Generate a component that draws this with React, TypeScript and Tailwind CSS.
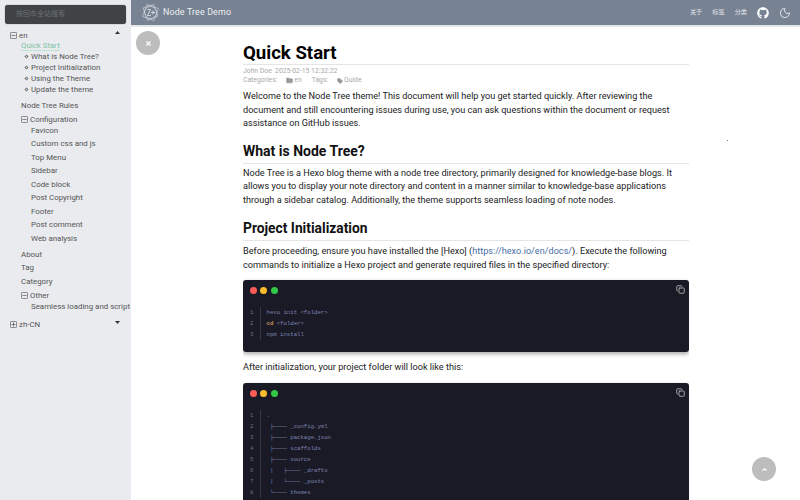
import { Copy, Moon, Folder, Tag, ChevronUp, X } from "lucide-react";
import { FaGithub } from "react-icons/fa";

const sans = "[font-family:'Roboto','Noto_Sans_CJK_SC',sans-serif]";

function TreeBox({ open }: { open: boolean }) {
  return (
    <svg width="7" height="7" viewBox="0 0 7 7" className="shrink-0 text-[#555]" fill="none" stroke="currentColor" strokeWidth="0.7">
      <rect x="0.4" y="0.4" width="6.2" height="6.2" rx="1" />
      <path d="M1.5 3.5h4" />
      {!open && <path d="M3.5 1.5v4" />}
    </svg>
  );
}

function Caret({ up }: { up: boolean }) {
  return (
    <svg width="5" height="3" viewBox="0 0 7 4" className="fill-[#333]">
      <path d={up ? "M3.5 0L7 4H0z" : "M3.5 4L7 0H0z"} />
    </svg>
  );
}

function Sub({ label }: { label: string }) {
  return (
    <div className="flex h-[11px] items-center gap-[3.5px] pl-[24.5px]">
      <span className="h-[3px] w-[3px] rotate-45 border-[0.5px] border-[#777]" />
      <span>{label}</span>
    </div>
  );
}

function Sidebar() {
  const config = ["Favicon", "Custom css and js", "Top Menu", "Sidebar", "Code block", "Post Copyright", "Footer", "Post comment", "Web analysis"];
  return (
    <aside className="h-full w-[131px] shrink-0 overflow-hidden bg-[#e9ebef] text-[7.9px] leading-[11px] text-[#555]">
      <div className="mx-[5px] mt-[5px] flex h-[19px] w-[121px] items-center rounded-[3px] bg-[#3f4346] pl-[11px] text-[7px] text-[#6b6f72] shadow-[0_0_1px_#333]">
        按回车全站搜索
      </div>
      <div className="relative mt-[6px] flex h-[10px] items-center gap-[2px] pl-[10px]">
        <TreeBox open />
        <span>en</span>
        <span className="absolute left-[115px] top-[1px]"><Caret up /></span>
      </div>
      <div className="ml-[21px] h-[11px] w-[39px] whitespace-nowrap border-b border-[#bfe3d3] text-[#7cc5a5]">Quick Start</div>
      <div className="flex flex-col whitespace-nowrap">
        <Sub label="What is Node Tree?" />
        <Sub label="Project Initialization" />
        <Sub label="Using the Theme" />
        <Sub label="Update the theme" />
      </div>
      <div className="mt-[5px] h-[11px] pl-[21px]">Node Tree Rules</div>
      <div className="mt-[3px] flex h-[11px] items-center gap-[2px] pl-[21px]">
        <TreeBox open />
        <span>Configuration</span>
      </div>
      <div className="flex flex-col gap-[2.45px] pl-[31px]">
        {config.map((c) => (
          <div key={c} className="h-[11px]">{c}</div>
        ))}
      </div>
      <div className="mt-[5px] flex flex-col gap-[2.5px] pl-[21px]">
        <div className="h-[11px]">About</div>
        <div className="h-[11px]">Tag</div>
        <div className="h-[11px]">Category</div>
      </div>
      <div className="mt-[3px] flex h-[11px] items-center gap-[2px] pl-[21px]">
        <TreeBox open />
        <span>Other</span>
      </div>
      <div className="h-[11px] whitespace-nowrap pl-[31px]">Seamless loading and script</div>
      <div className="relative mt-[7px] flex h-[11px] items-center gap-[2px] pl-[10px]">
        <TreeBox open={false} />
        <span>zh-CN</span>
        <span className="absolute left-[115px] top-[2px]"><Caret up={false} /></span>
      </div>
    </aside>
  );
}

function Logo() {
  return (
    <svg width="19" height="19" viewBox="0 0 19 19" fill="none" stroke="#e6e9ee" strokeWidth="0.5">
      <circle cx="9.5" cy="9.5" r="6" />
      <path d="M6 1.5L17.5 5.5 13 17.5 1.5 13.5z" />
      <path d="M2 5l10.5-3.5L17 13 6.5 17.5z" />
      <path d="M6.5 6.5h3L6.5 12.5h3.5M12 7.5v4M10 9.5h4" strokeWidth="0.8" />
    </svg>
  );
}

function Header() {
  return (
    <header className="flex h-[27px] shrink-0 items-center border-b-2 border-[#e6e6e6] bg-[#778292] pl-[10px] pr-[9px] text-white">
      <Logo />
      <span className="ml-[3px] text-[8.9px] tracking-[0.15px] text-[#eef0f3]">Node Tree Demo</span>
      <div className="ml-auto flex items-center text-[6.2px] text-[#e6e9ee]">
        <span>关于</span>
        <span className="ml-[10px]">标签</span>
        <span className="ml-[10px]">分类</span>
        <FaGithub className="ml-[10px] h-[12px] w-[12px] text-white" />
        <Moon className="ml-[10px] h-[12px] w-[12px] text-[#eef0f3]" strokeWidth={1.8} />
      </div>
    </header>
  );
}

function CodeBlock({ lines, className }: { lines: React.ReactNode[]; className: string }) {
  return (
    <div className={`relative w-[446px] rounded-[3px] bg-[#1a1a26] pb-[12.2px] pt-[7px] shadow-[0_2px_4px_rgba(0,0,0,0.35)] ${className}`}>
      <div className="flex gap-[3.5px] pl-[6.5px]">
        <span className="h-[7px] w-[7px] rounded-full bg-[#fc5b57]" />
        <span className="h-[7px] w-[7px] rounded-full bg-[#fdbc2e]" />
        <span className="h-[7px] w-[7px] rounded-full bg-[#33c748]" />
      </div>
      <Copy className="absolute right-[4px] top-[5px] h-[9px] w-[9px] text-[#c8c8c8]" strokeWidth={2} />
      <div className="mt-[12.5px] flex font-['Liberation_Mono',monospace] text-[5.67px] leading-[11px]">
        <div className="w-[17px] pr-[6.5px] text-right text-[#6a6f80]">
          {lines.map((_, i) => (
            <div key={i}>{i + 1}</div>
          ))}
        </div>
        <div className="whitespace-pre border-l border-[#353545] pl-[5.5px] text-[#7c86b0]">
          {lines.map((l, i) => (
            <div key={i} className="h-[11px]">{l}</div>
          ))}
        </div>
      </div>
    </div>
  );
}

function Article() {
  return (
    <main className="h-[473px] w-[446px] overflow-hidden pt-[16px] text-[9.15px] leading-[13.5px] text-[#222]">
      <h1 className="border-b border-[#e5e5e5] text-[18.6px] font-bold leading-[21px] text-black">Quick Start</h1>
      <div className="mt-[2px] text-[6.8px] leading-[9px] text-[#aaa]">
        <div>John Doe&nbsp;&nbsp;2025-02-15 12:32:22</div>
        <div className="flex items-center">
          <span>Categories:</span>
          <Folder className="ml-[9px] mr-[1px] h-[7px] w-[7px] fill-[#999] text-[#999]" />
          <span>en</span>
          <span className="ml-[10px]">Tags:</span>
          <Tag className="ml-[9px] mr-[1px] h-[6px] w-[6px] fill-[#999] text-[#999]" />
          <span>Guide</span>
        </div>
      </div>
      <p className="mt-[5px] whitespace-nowrap">
        Welcome to the Node Tree theme! This document will help you get started quickly. After reviewing the<br />
        document and still encountering issues during use, you can ask questions within the document or request<br />
        assistance on GitHub issues.
      </p>
      <h2 className="mt-[10px] border-b border-[#e5e5e5] pb-[2px] text-[14px] font-bold leading-[20px] text-[#111]">What is Node Tree?</h2>
      <p className="mt-[3px] whitespace-nowrap">
        Node Tree is a Hexo blog theme with a node tree directory, primarily designed for knowledge-base blogs. It<br />
        allows you to display your note directory and content in a manner similar to knowledge-base applications<br />
        through a sidebar catalog. Additionally, the theme supports seamless loading of note nodes.
      </p>
      <h2 className="mt-[11px] border-b border-[#e5e5e5] pb-[2px] text-[13.8px] font-bold leading-[20px] text-[#111]">Project Initialization</h2>
      <p className="mt-[4px] whitespace-nowrap">
        Before proceeding, ensure you have installed the [Hexo] (<span className="text-[#4a6fa5]">https://hexo.io/en/docs/</span>). Execute the following<br />
        commands to initialize a Hexo project and generate required files in the specified directory:
      </p>
      <CodeBlock
        className="mt-[8px]"
        lines={[
          "hexo init <folder>",
          <><span className="font-bold text-[#c9975b]">cd</span> {"<folder>"}</>,
          "npm install",
        ]}
      />
      <p className="mt-[9px]">After initialization, your project folder will look like this:</p>
      <CodeBlock
        className="mt-[9px]"
        lines={[
          ".",
          " ├──── _config.yml",
          " ├──── package.json",
          " ├──── scaffolds",
          " ├──── source",
          " |   ├──── _drafts",
          " |   └──── _posts",
          " └──── themes",
        ]}
      />
    </main>
  );
}

export default function App() {
  return (
    <div className={`relative flex h-[500px] w-[800px] overflow-hidden bg-white ${sans}`}>
      <Sidebar />
      <div className="flex min-w-0 flex-1 flex-col">
        <Header />
        <div className="pl-[112px]">
          <Article />
        </div>
      </div>
      <button className="absolute left-[136px] top-[31px] flex h-[24px] w-[24px] items-center justify-center rounded-full bg-[#bdbdbd] text-white">
        <X className="h-[7px] w-[7px]" strokeWidth={4} />
      </button>
      <button className="absolute left-[752px] top-[457px] flex h-[24px] w-[24px] items-center justify-center rounded-full bg-[#bdbdbd] text-white">
        <ChevronUp className="h-[7px] w-[7px]" strokeWidth={4} />
      </button>
      <span className="absolute left-[727px] top-[140px] h-px w-px bg-[#777]" />
    </div>
  );
}
